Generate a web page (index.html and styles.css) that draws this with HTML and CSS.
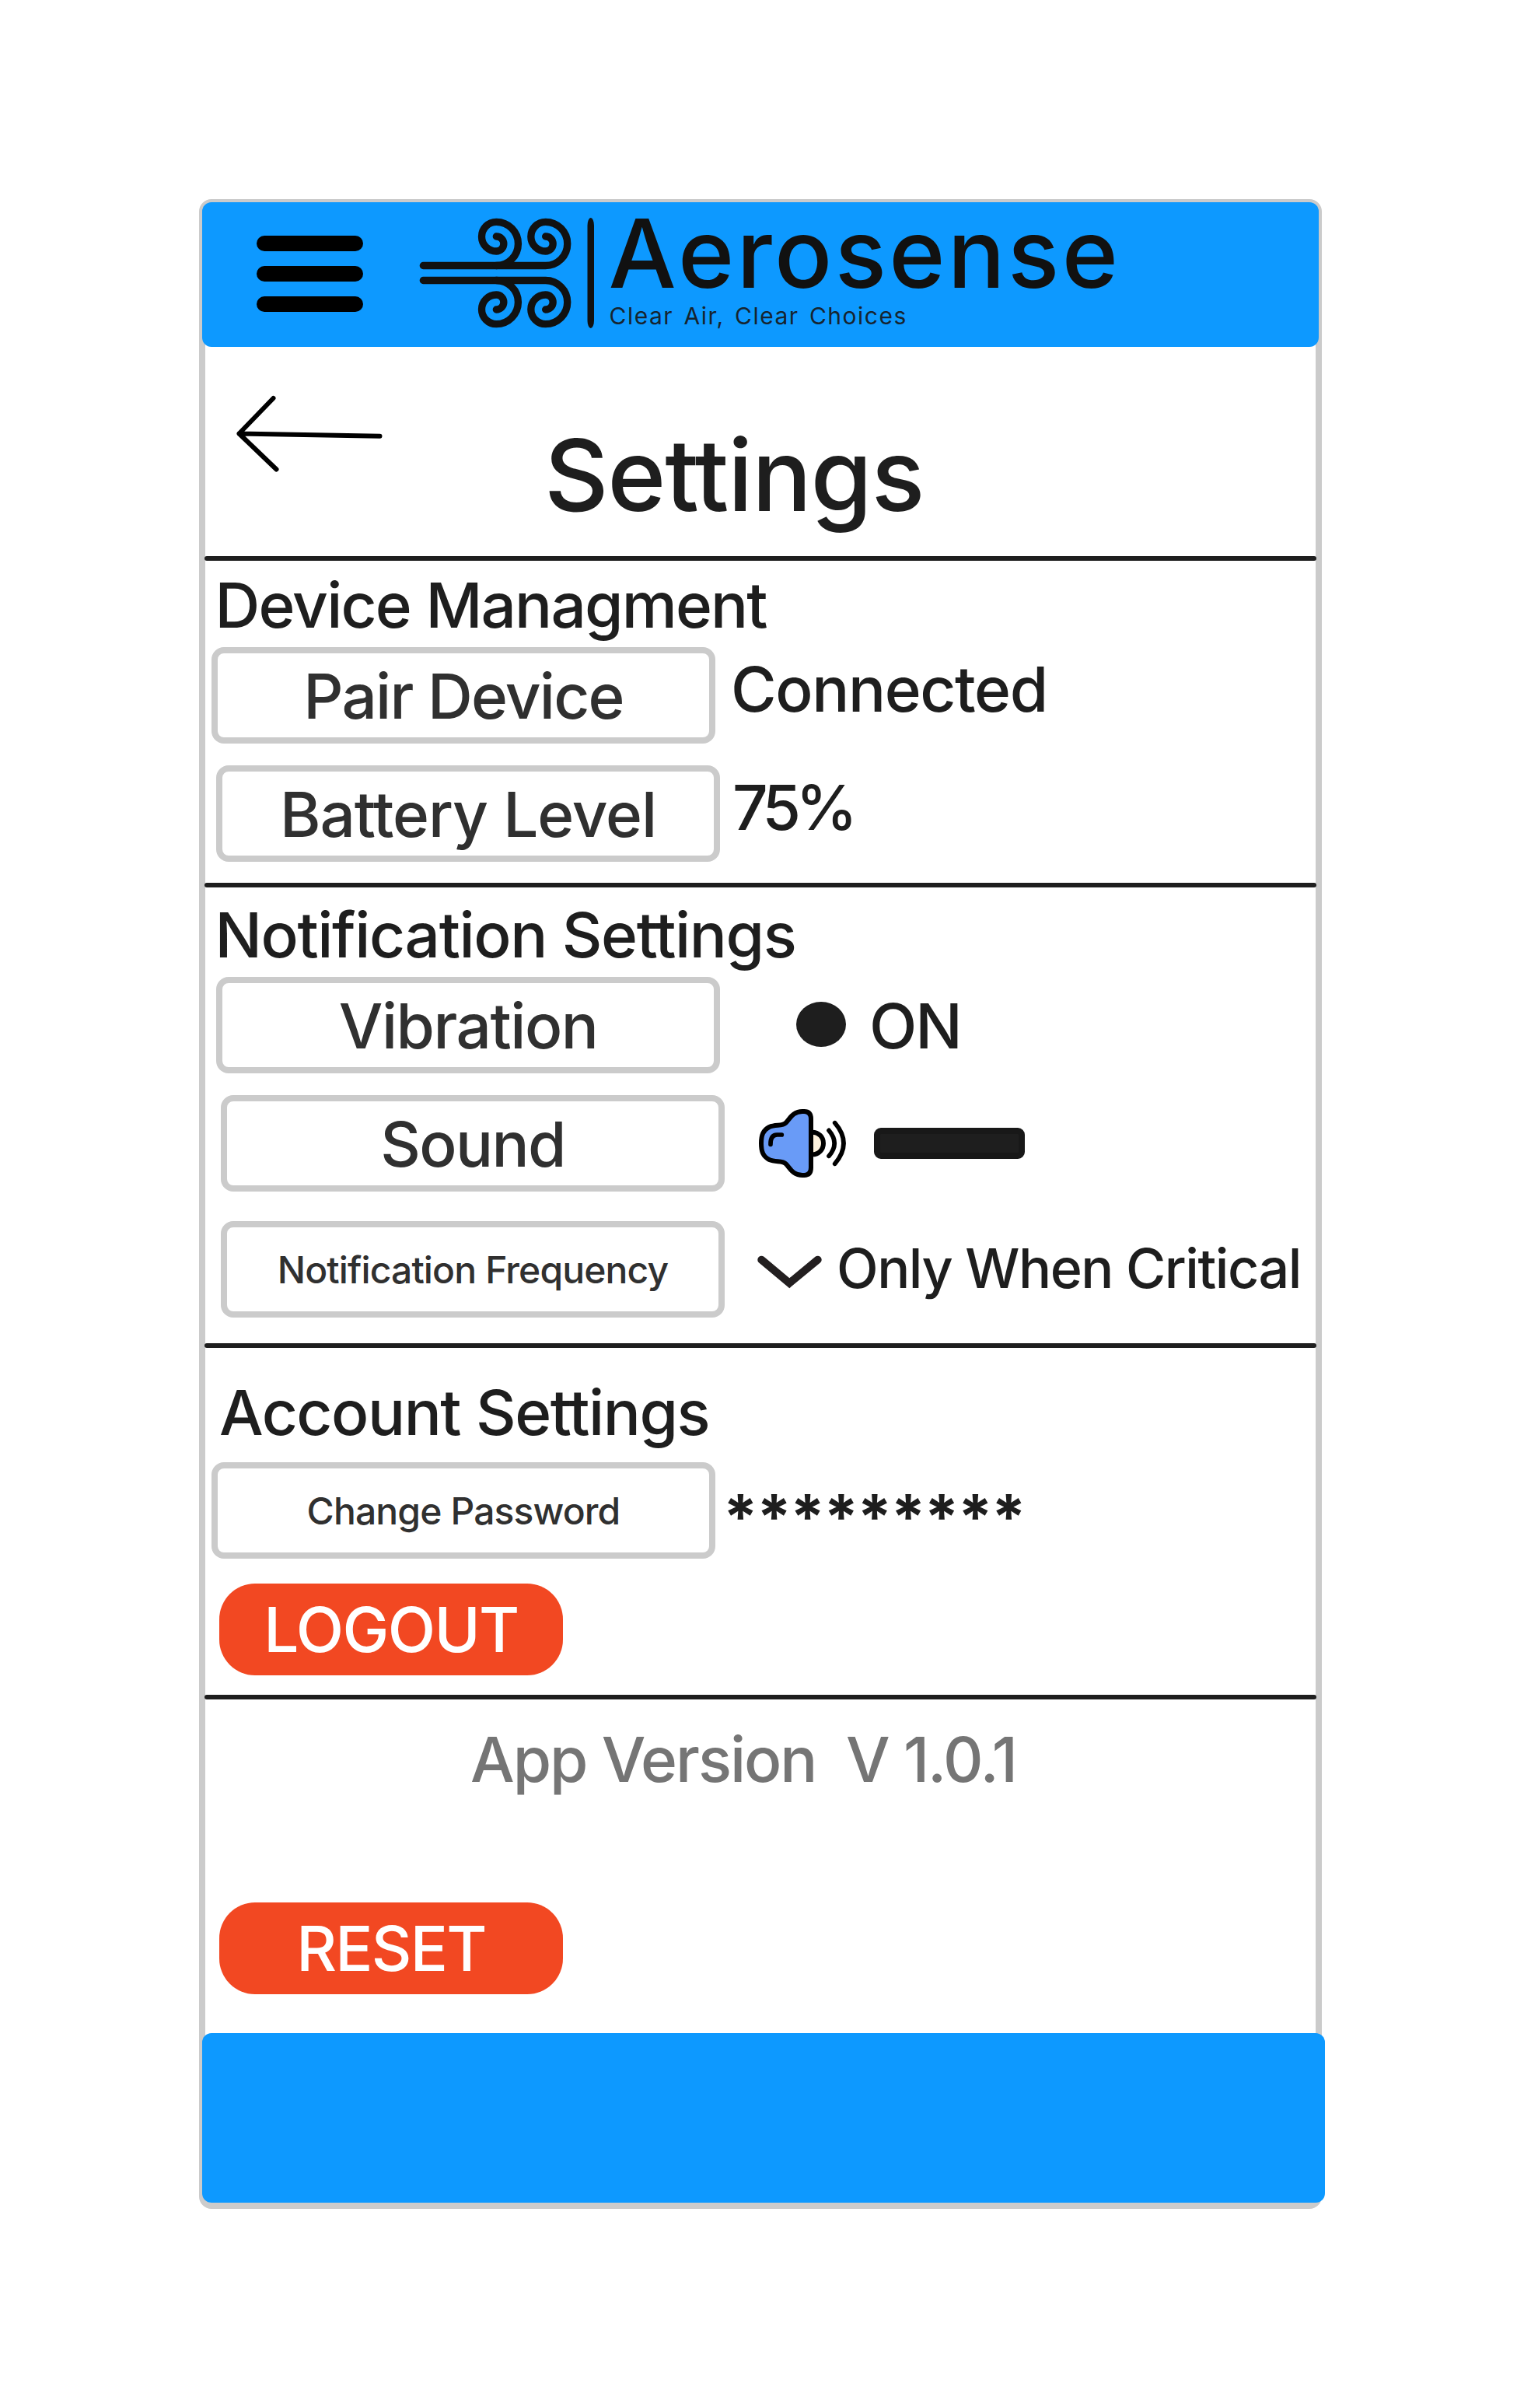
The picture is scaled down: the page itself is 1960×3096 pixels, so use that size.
FILE: index.html
```html
<!DOCTYPE html>
<html lang="en">
<head>
<meta charset="utf-8">
<title>Aerosense – Settings</title>
<link rel="stylesheet" href="styles.css">
</head>
<body>
<main class="phone">
  <header class="topbar">
    <svg class="menu-icon" viewBox="0 0 138 98" aria-label="Menu">
      <rect width="137" height="20" rx="10"/>
      <rect y="39" width="137" height="20" rx="10"/>
      <rect y="78" width="137" height="20" rx="10"/>
    </svg>
    <svg class="logo" viewBox="0 0 920 170" aria-label="Aerosense">
      <g class="logo-wind" transform="scale(.33333)">
        <path d="M43 229.5H515A84.25 84.25 0 0 0 515 61A56.5 56.5 0 0 0 515 174A28.5 28.5 0 0 0 515 117"/>
        <path d="M325 229.5A84.25 84.25 0 0 0 325 61A56.5 56.5 0 0 0 325 174A28.5 28.5 0 0 0 325 117"/>
        <path d="M43 286.5H515A84.25 84.25 0 0 1 515 455A56.5 56.5 0 0 1 515 342A28.5 28.5 0 0 1 515 399"/>
        <path d="M325 286.5A84.25 84.25 0 0 1 325 455A56.5 56.5 0 0 1 325 342A28.5 28.5 0 0 1 325 399"/>
      </g>
      <rect class="logo-ink" x="225.5" y="15" width="8.5" height="142" rx="4.2" ry="10"/>
      <text class="logo-name" x="252.500" y="104.7">Aerosense</text>
      <text class="logo-tag" x="253.5" y="151.5">Clear Air, Clear Choices</text>
    </svg>
  </header>

  <section class="title">
    <svg class="back-icon" viewBox="0 0 196 104" aria-label="Back">
      <path d="M51.500 8L7.500 53.500L55.500 99.500M7.500 53.500L188.500 56.700"/>
    </svg>
    <h1>Settings</h1>
  </section>

  <hr>
  <section class="device">
    <h2 class="t-device">Device Managment</h2>
    <div class="row">
      <button class="box t-pair">Pair Device</button>
      <span class="value connected">Connected</span>
    </div>
    <div class="row inset">
      <button class="box t-battery">Battery Level</button>
      <span class="value battery">75%</span>
    </div>
  </section>

  <hr>
  <section class="notifications">
    <h2 class="t-notif">Notification Settings</h2>
    <div class="row inset">
      <button class="box t-vibration">Vibration</button>
      <span class="dot"></span>
      <span class="value on">ON</span>
    </div>
    <div class="row inset-more">
      <button class="box t-sound">Sound</button>
      <svg class="speaker" viewBox="0 0 120 100" aria-label="Volume">
        <g transform="translate(-6 -10) scale(.33333)">
          <path class="cone" d="M235 137C262 137 279 157 279 180S262 223 235 223"/>
          <path class="horn" d="M231 180V86Q231 57 205 57H198C160 57 150 85 134 101C120 115 95 106 70 117C45 130 39 150 39 180C39 210 45 230 70 243C95 254 120 245 134 259C150 275 160 303 198 303H205Q231 303 231 274Z"/>
          <path class="wave" d="M75 184Q74 148 100 147H118"/>
          <path class="wave" d="M300 130Q343 180 300 229"/>
          <path class="wave" d="M323 101Q391 180 323 259"/>
        </g>
      </svg>
      <span class="slider"></span>
    </div>
    <div class="row inset-more frequency">
      <button class="box small t-freq">Notification Frequency</button>
      <svg class="chevron" viewBox="0 0 92 48"><path d="M9.300 8.700L45.300 38.700L81.700 8.700"/></svg>
      <span class="value critical">Only When Critical</span>
    </div>
  </section>

  <hr>
  <section class="account">
    <h2 class="t-account">Account Settings</h2>
    <div class="row">
      <button class="box small t-password">Change Password</button>
      <span class="value stars">*********</span>
    </div>
    <button class="action t-logout">LOGOUT</button>
  </section>

  <hr>
  <section class="about">
    <p class="version">App Version&nbsp; V 1.0.1</p>
    <button class="action t-reset">RESET</button>
  </section>

  <footer class="bottombar"></footer>
</main>
</body>
</html>
```
FILE: styles.css
```css
* { box-sizing: border-box; }

body {
  margin: 0;
  padding: 256px;
  background: #fff;
  color: #1e1e1e;
  font-family: Inter, "Liberation Sans", sans-serif;
}

h1, h2, p { margin: 0; font-weight: 500; white-space: nowrap; }
button { padding: 0; font-family: inherit; font-weight: 500; white-space: nowrap; }
svg { display: block; flex: none; }

.phone {
  display: flex;
  flex-direction: column;
  width: 1444px;
  height: 2584px;
  border: 8px solid #cbcbcb;
  border-radius: 16px;
}

/* Top bar */
.topbar {
  display: flex;
  align-items: flex-start;
  flex: none;
  width: 1436px;
  height: 186px;
  margin: -4px 0 0 -4px;
  background: #0d99ff;
  border-radius: 12px;
}
.menu-icon { width: 138px; height: 98px; margin: 43px 0 0 70px; }
.logo { width: 920px; height: 170px; margin: 5px 0 0 62px; overflow: visible; }
.logo-wind { fill: none; stroke: #111; stroke-width: 28; stroke-linecap: round; }
.logo-ink, .logo-name { fill: #111; }
.logo-name { font-size: 123px; font-weight: 500; letter-spacing: 3.3px; }
.logo-tag { fill: #16242f; font-size: 30px; letter-spacing: 1.5px; word-spacing: 3.4px; }

/* Page title */
.title { display: flex; flex: none; align-items: flex-start; height: 269px; }
.back-icon { width: 196px; height: 104px; margin: 58px 0 0 36px; }
.back-icon path { fill: none; stroke: #000; stroke-width: 6; stroke-linecap: round; stroke-linejoin: round; }
h1 { margin: 101px 0 0 204px; font-size: 128px; line-height: 128px; letter-spacing: -1.35px; }

hr {
  flex: none;
  width: 1430px;
  height: 6px;
  margin: 0 0 0 -1px;
  border: 0;
  border-radius: 3px;
  background: #1e1e1e;
}

/* Setting groups */
h2 { font-size: 80px; line-height: 80px; padding-left: 12.5px; }
section { flex: none; }
.device { height: 414px; padding-top: 17px; }
.notifications { height: 586px; padding-top: 21px; }
.account { height: 446px; padding-top: 43px; }
.about { height: 429px; padding-top: 37px; }

.row { display: flex; align-items: center; height: 124px; margin: 14px 0 0 8px; }
.row + .row { margin-top: 28px; }
.inset { margin-left: 14px; }
.inset-more { margin-left: 20px; }
.row.frequency { margin-top: 38px; }
.account .row { margin-top: 24px; }

.box {
  flex: none;
  width: 648px;
  height: 124px;
  border: 8px solid #cbcbcb;
  border-radius: 16px;
  background: #fff;
  color: #303030;
  font-size: 80px;
  line-height: 80px;
  padding-top: 1px;
}
.box.small { font-size: 48px; }

.value { font-size: 80px; line-height: 80px; font-weight: 500; white-space: nowrap; }
.connected { margin: 0 0 16px 20px; }
.battery { margin: 0 0 16px 16px; }
.dot { width: 64px; height: 58px; margin: 0 0 2px 98px; border-radius: 50%; background: #1e1e1e; }
.on { margin: 2px 0 0 30px; }

.speaker { width: 120px; height: 100px; margin-left: 40px; }
.speaker path { fill: none; stroke: #000; stroke-width: 18; stroke-linecap: round; }
.speaker .horn { fill: #699bf7; }
.speaker .cone { fill: #fef2dc; }
.speaker .wave { stroke-width: 17; }
.slider { width: 194px; height: 40px; margin-left: 32px; border: 8px solid #181818; border-radius: 9px; background: #1e1e1e; }

.chevron { width: 92px; height: 48px; margin: 6px 0 0 38px; }
.chevron path { fill: none; stroke: #231f20; stroke-width: 10; stroke-linecap: round; }
.critical { margin: 0 0 3px 14px; font-size: 70px; }
.stars { margin: 15px 0 0 10px; font-weight: 700; letter-spacing: -1.6px; }

.action {
  display: block;
  width: 442px;
  height: 118px;
  margin: 32px 0 0 18px;
  border: 0;
  border-radius: 46px;
  background: #f24822;
  color: #fff;
  font-size: 80px;
  line-height: 118px;
}
.version { padding-left: 341px; color: #757575; font-size: 80px; line-height: 80px; }
.about .action { margin-top: 144px; }

.bottombar { flex: none; width: 1444px; height: 218px; margin-left: -4px; border-radius: 12px; background: #0d99ff; }

/* Tracking */
.t-device { letter-spacing: -1.85px; }
.t-pair { letter-spacing: -1.8px; }
.t-battery { letter-spacing: -1.1px; }
.connected { letter-spacing: -1.4px; }
.battery { letter-spacing: -6.5px; }
.t-notif { letter-spacing: -1.4px; }
.t-vibration { letter-spacing: -1.5px; }
.t-sound { letter-spacing: -1.6px; }
.t-freq { letter-spacing: -.87px; }
.on { letter-spacing: -2px; }
.critical { letter-spacing: -1.5px; }
.t-account { letter-spacing: -1.45px; padding-left: 18px; }
.t-password { letter-spacing: -.87px; }
.t-logout { letter-spacing: -1.6px; }
.version { letter-spacing: -2.05px; }
.t-reset { letter-spacing: -1.7px; }
```
